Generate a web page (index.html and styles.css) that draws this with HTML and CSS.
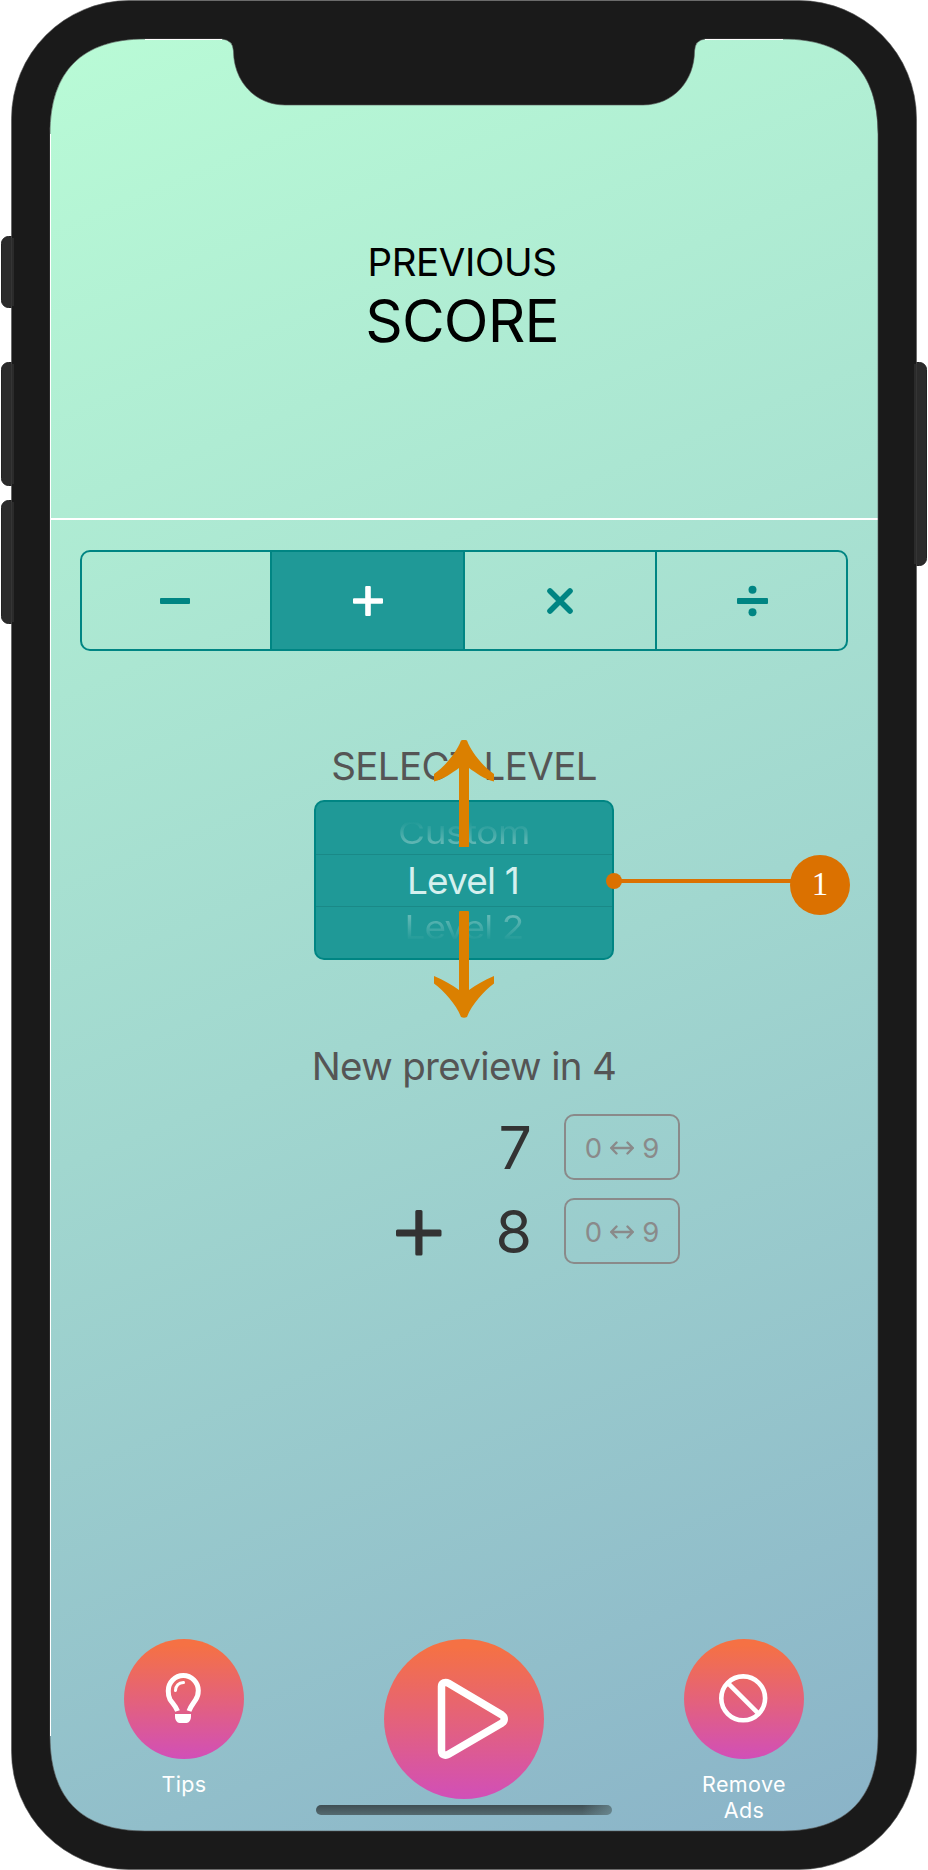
FILE: index.html
```html
<!DOCTYPE html>
<html lang="en">
<head>
<meta charset="utf-8">
<title>Level selection</title>
<link rel="stylesheet" href="styles.css">
</head>
<body>
<div class="phone">
  <main class="screen">
    <header class="score">
      <div class="score-small">PREVIOUS</div>
      <div class="score-big">SCORE</div>
    </header>

    <nav class="operators">
      <button class="operator"><svg width="32" height="32" viewBox="0 0 32 32"><rect x="0" y="13" width="30" height="6" rx="1"/></svg></button>
      <button class="operator active"><svg width="32" height="32" viewBox="0 0 32 32"><path d="M2 13.200H13.200V2a1 1 0 0 1 1-1H17.800a1 1 0 0 1 1 1V13.200H30a1 1 0 0 1 1 1V17.800a1 1 0 0 1-1 1H18.800V30a1 1 0 0 1-1 1H14.200a1 1 0 0 1-1-1V18.800H2a1 1 0 0 1-1-1V14.200a1 1 0 0 1 1-1Z"/></svg></button>
      <button class="operator"><svg width="32" height="32" viewBox="0 0 32 32"><path d="M6 6 26 26M26 6 6 26" stroke="currentColor" stroke-width="5.6" stroke-linecap="round"/></svg></button>
      <button class="operator"><svg width="32" height="32" viewBox="0 0 32 32"><rect x="1" y="13" width="31" height="6" rx="1"/><circle cx="16.5" cy="4.8" r="4"/><circle cx="16.5" cy="27.2" r="4"/></svg></button>
    </nav>

    <h2 class="select-title">SELECT LEVEL</h2>
    <section class="picker">
      <div class="picker-row above"><span>Custom</span></div>
      <div class="picker-row current"><span>Level 1</span></div>
      <div class="picker-row below"><span>Level 2</span></div>
      <svg class="swipe" width="60" height="278" viewBox="0 0 60 278">
        <path d="M27 0.6Q30-1 33 0.6C38 14 50 27 60 34V41.500C50 39 42 33 35 28V107H25V28C18 33 10 39 0 41.500V34C10 27 22 14 27 0.600Z"/>
        <path d="M27 276.900Q30 278.500 33 276.900C38 264 50 251 60 243.500V236C50 240 42 245 35 250V172Q35 171 34 171H26Q25 171 25 172V250C18 245 10 240 0 236V243.500C10 251 22 264 27 276.900Z"/>
      </svg>
      <div class="callout"><i class="callout-dot"></i><i class="callout-line"></i><b class="callout-badge">1</b></div>
    </section>

    <p class="preview-title">New preview in 4</p>
    <section class="sum">
      <div class="sum-row">
        <span class="sign"></span>
        <span class="digit">7</span>
        <div class="range"><span>0</span><svg width="24" height="14" viewBox="0 0 24 14"><path d="M1.200 7H22.800M6.500 1.500 1.200 7l5.300 5.500M17.500 1.500 22.800 7l-5.300 5.500"/></svg><span>9</span></div>
      </div>
      <div class="sum-row">
        <span class="sign"><svg width="46" height="46" viewBox="0 0 46 46"><path d="M1.500 19.500H19.300V1.500a1.500 1.500 0 0 1 1.500-1.500H25a1.500 1.500 0 0 1 1.500 1.500V19.500H44a1.500 1.500 0 0 1 1.500 1.500V25a1.500 1.500 0 0 1-1.500 1.500H26.500V44a1.500 1.500 0 0 1-1.500 1.500H20.800a1.500 1.500 0 0 1-1.500-1.500V26.500H1.500A1.500 1.500 0 0 1 0 25V21a1.500 1.500 0 0 1 1.500-1.500Z"/></svg></span>
        <span class="digit">8</span>
        <div class="range"><span>0</span><svg width="24" height="14" viewBox="0 0 24 14"><path d="M1.200 7H22.800M6.500 1.500 1.200 7l5.300 5.500M17.500 1.500 22.800 7l-5.300 5.500"/></svg><span>9</span></div>
      </div>
    </section>

    <footer class="actions">
      <div class="action">
        <button class="round"><svg width="120" height="120" viewBox="0 0 120 120"><path d="M53.500 72C51.500 66.500 48.500 64.500 46 60.500C44 57 44.300 54 44.300 51.500A15 15 0 0 1 74.300 51.500C74.300 54 74 57.500 71.500 61C69 65 67 66.500 65 72" fill="none" stroke="#fff" stroke-width="5"/><path d="M51.500 51.500Q52 44 59.500 43.500" fill="none" stroke="#fff" stroke-width="3" stroke-linecap="round"/><path d="M51 75H67V77.500C67 81 65 84 62.500 84H55.500C53 84 51 81 51 77.500Z" fill="#fff"/></svg></button>
        <span>Tips</span>
      </div>
      <div class="action">
        <button class="round large"><svg width="160" height="160" viewBox="0 0 160 160"><path d="M57.500 47.500C57.500 43.500 61.500 42.500 64.500 44.300L118 76C121 78 121 82 118 84L64.500 115.300C61.500 117 57.500 116 57.500 112Z" fill="none" stroke="#fff" stroke-width="7.500"/></svg></button>
      </div>
      <div class="action">
        <button class="round"><svg width="120" height="120" viewBox="0 0 120 120"><circle cx="59.200" cy="59.300" r="21.900" fill="none" stroke="#fff" stroke-width="4.600"/><path d="M43.700 43.800 74.700 74.800" stroke="#fff" stroke-width="4.600"/></svg></button>
        <span>Remove Ads</span>
      </div>
    </footer>
    <div class="home-bar"></div>
  </main>

  <svg class="frame" width="928" height="1870" viewBox="0 0 928 1870">
    <g class="side-buttons">
      <rect x="1.500" y="236.500" width="20" height="71" rx="7"/>
      <rect x="1.500" y="362.500" width="20" height="123" rx="7"/>
      <rect x="1.500" y="500.500" width="20" height="123" rx="7"/>
      <rect x="906.500" y="362.500" width="20" height="203" rx="7"/>
    </g>
    <path class="body" fill-rule="evenodd" d="M129 .5H799A118 118 0 0 1 916.500 118.500V1751.500A118 118 0 0 1 799 1869.500H129A118 118 0 0 1 11.500 1751.500V118.500A118 118 0 0 1 129 .5ZM50 134V1736C50 1799 82 1831 145 1831H783C846 1831 878 1799 878 1736V134C878 71 846 39 783 39H705Q695 40 694.500 51C694.500 80 674 105 643 105H285C254 105 233.500 80 233.500 51Q233 40 222 39H145C82 39 50 71 50 134Z"/>
    <path class="glint" d="M50.500 134V1736M145 39.500H222M705 39.500H783"/>
    <path class="shoulders" d="M11.500 238h2.500v68h-2.500ZM11.500 364h2.500v120h-2.500ZM11.500 502h2.500v120h-2.500ZM914 364h2.500v200H914Z"/>
  </svg>
</div>
</body>
</html>
```
FILE: styles.css
```css
* { box-sizing: border-box; }

body {
  margin: 0;
  background: #fff;
  font-family: Inter, "Liberation Sans", sans-serif;
}

button {
  padding: 0;
  border: 0;
  background: none;
  color: inherit;
  font: inherit;
}

svg { display: block; }

.phone {
  position: relative;
  width: 928px;
  height: 1870px;
  padding: 39px 50px;
  overflow: hidden;
}

.frame {
  position: absolute;
  inset: 0;
  pointer-events: none;
}

.body { fill: #1a1a1a; stroke: #555; stroke-width: 0.6; }
.side-buttons { fill: #2b2b2b; stroke: #222; stroke-width: 1; }
.shoulders { fill: #2b2b2b; }
.glint { fill: none; stroke: #fff; stroke-width: 1; }

.screen {
  display: flex;
  flex-direction: column;
  align-items: center;
  width: 828px;
  height: 1792px;
  border-radius: 78px;
  background: linear-gradient(157.5deg, #b9fbd6, #a1d7cf 53%, #8ab3c8);
}

.score {
  display: flex;
  flex-direction: column;
  align-items: center;
  align-self: stretch;
  height: 481px;
  padding: 199px 4px 0 0;
  border-bottom: 2px solid #fff;
  color: #000;
}

.score-small {
  font-size: 38.5px;
  line-height: 48px;
  letter-spacing: -0.4px;
}

.score-big {
  font-size: 58.5px;
  line-height: 70px;
  letter-spacing: -0.9px;
}

.operators {
  display: grid;
  grid-template-columns: 188px 193px 192px 191px;
  width: 768px;
  height: 101px;
  margin-top: 30px;
  border: 2px solid #008583;
  border-radius: 10px;
  color: #008583;
}

.operator {
  display: flex;
  align-items: center;
  justify-content: center;
}

.operator + .operator { border-left: 2px solid #008583; }
.operator svg { fill: currentColor; }
.operator.active { background: #1f9997; color: #fff; }

.select-title {
  margin: 91px 0 0;
  color: #555;
  font-size: 38.5px;
  font-weight: 400;
  line-height: 48px;
  letter-spacing: -0.6px;
}

.picker {
  position: relative;
  display: grid;
  grid-template-rows: 52px 53px 51px;
  width: 300px;
  height: 160px;
  margin-top: 10px;
  border: 2px solid #008583;
  border-radius: 10px;
  background: #1f9997;
}

.picker-row {
  display: flex;
  justify-content: center;
  align-items: center;
  overflow: hidden;
  color: #d5f0ee;
  font-size: 37px;
}

.picker-row.current {
  padding-right: 2px;
  border-top: 1px solid #1a8987;
  border-bottom: 1px solid #1a8987;
  letter-spacing: -0.8px;
}

.above span, .below span {
  -webkit-background-clip: text;
  background-clip: text;
  color: transparent;
  line-height: 44px;
}

.above span {
  background-image: linear-gradient(#1f9997 20%, #6abbb8 85%);
  letter-spacing: -0.5px;
  transform: translateY(5px) scaleY(0.86);
}

.below span {
  background-image: linear-gradient(#62b8b5 20%, #1f9997 83%);
  letter-spacing: -0.9px;
  transform: translateY(-5px) scaleY(0.88);
}

.swipe {
  position: absolute;
  top: -62px;
  left: 118px;
  fill: #db8000;
}

.callout {
  position: absolute;
  top: 51px;
  left: 290px;
  display: flex;
  align-items: center;
  height: 56px;
}

.callout-dot {
  width: 16px;
  height: 16px;
  border-radius: 50%;
  background: #db7100;
}

.callout-line {
  width: 172px;
  height: 4px;
  margin: 0 -3px 0 -1px;
  background: #db7100;
}

.callout-badge {
  width: 60px;
  height: 60px;
  margin-top: 8px;
  border-radius: 50%;
  background: #db7100;
  color: #fff;
  font: 33px/58px "Liberation Serif", serif;
  text-align: center;
}

.preview-title {
  margin: 82px 0 0;
  color: #555;
  font-size: 38.5px;
  line-height: 48px;
  letter-spacing: -0.65px;
}

.sum {
  display: grid;
  gap: 18px;
  width: 432px;
  margin-top: 24px;
}

.sum-row {
  display: grid;
  grid-template-columns: 196px 88px 116px;
  justify-content: end;
  align-items: center;
}

.sign {
  display: flex;
  justify-content: flex-end;
  padding: 3px 34px 0 0;
  fill: #333;
}

.digit {
  padding: 2px 32px 0 0;
  color: #333;
  font-size: 59px;
  line-height: 64px;
  text-align: right;
}

.range {
  display: flex;
  justify-content: center;
  align-items: center;
  gap: 8px;
  height: 66px;
  padding-top: 1px;
  border: 2px solid #8a8a8a;
  border-radius: 10px;
  color: #8a8a8a;
  font-size: 27.5px;
}

.range svg {
  fill: none;
  stroke: #8a8a8a;
  stroke-width: 2.4;
  stroke-linecap: round;
  stroke-linejoin: round;
}

.actions {
  display: flex;
  justify-content: space-between;
  width: 680px;
  height: 166px;
  margin-top: 375px;
}

.action {
  display: flex;
  flex-direction: column;
  align-items: center;
  gap: 12px;
  color: #fff;
  font-size: 21.5px;
  line-height: 26px;
  letter-spacing: 0.4px;
  text-align: center;
}

.action:not(:nth-child(2)) { width: 120px; }

.round {
  width: 120px;
  height: 120px;
  border-radius: 50%;
  background: linear-gradient(#f57144 5%, #e4627a 50%, #d14fb8);
}

.round.large { width: 160px; height: 160px; }

.action:last-child span { width: 100px; }

.home-bar {
  width: 296px;
  height: 10px;
  border-radius: 5px;
  background:
    linear-gradient(90deg, transparent 90%, rgba(120, 155, 165, 0.6)),
    linear-gradient(#3f4e53, #546a70);
}
```
